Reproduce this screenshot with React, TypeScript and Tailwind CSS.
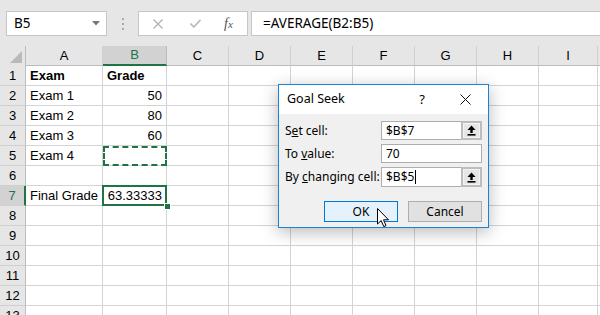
import React from "react";

const colW = [77, 64, 62, 62, 62, 62, 62, 62, 59, 40];
const colNames = ["A", "B", "C", "D", "E", "F", "G", "H", "I", ""];

type Cell = { text: string; bold?: boolean; right?: boolean };

const data: Record<number, Cell[]> = {
  1: [{ text: "Exam", bold: true }, { text: "Grade", bold: true }],
  2: [{ text: "Exam 1" }, { text: "50", right: true }],
  3: [{ text: "Exam 2" }, { text: "80", right: true }],
  4: [{ text: "Exam 3" }, { text: "60", right: true }],
  5: [{ text: "Exam 4" }, { text: "" }],
  7: [{ text: "Final Grade" }, { text: "63.33333", right: true }],
};

const UpArrow = () => (
  <svg width="9" height="11" viewBox="0 0 9 11">
    <polygon points="4.5,0.5 8.5,5 0.5,5" fill="#000" />
    <rect x="3.3" y="4.5" width="2.4" height="3.5" fill="#000" />
    <rect x="0.5" y="9" width="8" height="1.6" fill="#000" />
  </svg>
);

const RefButton = () => (
  <div className="w-[21px] h-full border-2 border-[#bdbdbd] bg-[#e6e6e6] flex items-center justify-center shrink-0">
    <div className="w-full h-full border border-[#f4f4f4] flex items-center justify-center">
      <UpArrow />
    </div>
  </div>
);

const Cursor = () => (
  <svg width="13" height="20" viewBox="0 0 13 20" className="absolute left-[377px] top-[208px]">
    <path
      d="M0.5 0.5 L0.5 16 L4.2 12.6 L6.8 18.6 L9 17.6 L6.5 11.8 L11.5 11.8 Z"
      fill="#fff"
      stroke="#000"
      strokeWidth="1"
      strokeLinejoin="round"
    />
  </svg>
);

const GoalSeek = () => (
  <div
    className="absolute left-[278px] top-[84px] w-[211px] h-[144px] border border-[#1883d7] bg-[#f0f0f0] shadow-[0_4px_16px_rgba(0,0,0,0.28)] flex flex-col text-[12px] text-black"
    style={{ fontFamily: '"Noto Sans", "Open Sans", sans-serif' }}
  >
    <div className="h-[29px] bg-white flex items-center pl-[8px] shrink-0">
      <span className="text-[12.5px]">Goal Seek</span>
      <span className="ml-auto w-[20px] text-center text-[13px] mr-[28px]">?</span>
      <svg width="11" height="11" viewBox="0 0 11 11" className="mr-[17px]">
        <path d="M0.5 0.5 L10.5 10.5 M10.5 0.5 L0.5 10.5" stroke="#111" strokeWidth="1" />
      </svg>
    </div>
    <div className="flex flex-col pl-[6px] pr-[6px] pt-[7px] gap-[4px]">
      <div className="flex items-center h-[19px]">
        <span className="w-[96px]">
          S<span className="underline">e</span>t cell:
        </span>
        <div className="flex h-full flex-1">
          <div className="flex-1 bg-white border border-[#adadad] border-r-0 flex items-center pl-[4px]">$B$7</div>
          <RefButton />
        </div>
      </div>
      <div className="flex items-center h-[19px]">
        <span className="w-[96px]">
          To <span className="underline">v</span>alue:
        </span>
        <div className="flex-1 h-full bg-white border border-[#adadad] flex items-center pl-[4px]">70</div>
      </div>
      <div className="flex items-center h-[20px]">
        <span className="w-[96px]">
          By <span className="underline">c</span>hanging cell:
        </span>
        <div className="flex h-full flex-1">
          <div className="flex-1 bg-white border border-[#adadad] border-r-0 flex items-center pl-[4px]">
            $B$5<span className="inline-block w-px h-[14px] bg-black ml-px" />
          </div>
          <RefButton />
        </div>
      </div>
      <div className="flex justify-end gap-[10px] mt-[10px]">
        <div className="w-[74px] h-[21px] bg-[#e5f1fb] border border-[#0078d7] flex items-center justify-center">OK</div>
        <div className="w-[74px] h-[21px] bg-[#e1e1e1] border border-[#adadad] flex items-center justify-center">Cancel</div>
      </div>
    </div>
  </div>
);

export default function App() {
  const rows = Array.from({ length: 13 }, (_, i) => i + 1);
  return (
    <div
      className="relative w-[600px] h-[315px] overflow-hidden bg-white text-black"
      style={{ fontFamily: '"Liberation Sans", Arial, sans-serif' }}
    >
      {/* formula bar */}
      <div className="h-[46px] bg-[#e6e6e6] flex items-start pt-[11px] pl-[6px]" style={{ fontFamily: '"Noto Sans", "Open Sans", sans-serif' }}>
        <div className="w-[101px] h-[25px] bg-white border border-[#c6c6c6] flex items-center pl-[7px] text-[13.5px]">
          <span>B5</span>
          <svg width="8" height="5" viewBox="0 0 8 5" className="ml-auto mr-[6px]">
            <polygon points="0,0 8,0 4,4.5" fill="#777" />
          </svg>
        </div>
        <div className="w-[31px] h-[25px] flex flex-col items-center justify-center gap-[3px]">
          <span className="w-[2px] h-[2px] bg-[#aaa]" />
          <span className="w-[2px] h-[2px] bg-[#aaa]" />
          <span className="w-[2px] h-[2px] bg-[#aaa]" />
        </div>
        <div className="w-[110px] h-[25px] bg-white border border-[#c6c6c6] flex items-center">
          <svg width="10" height="10" viewBox="0 0 10 10" className="ml-[14px]">
            <path d="M0.5 0.5 L9.5 9.5 M9.5 0.5 L0.5 9.5" stroke="#b0b0b0" strokeWidth="1.2" />
          </svg>
          <svg width="11" height="9" viewBox="0 0 11 9" className="ml-[27px]">
            <path d="M0.5 4.5 L3.8 8 L10.5 0.8" stroke="#b8b8b8" strokeWidth="1.6" fill="none" />
          </svg>
          <span
            className="ml-[23px] italic text-[14px] text-[#555] leading-none"
            style={{ fontFamily: '"Liberation Serif", "Times New Roman", serif' }}
          >
            f<span className="text-[11px]">x</span>
          </span>
        </div>
        <div className="ml-[3px] flex-1 h-[25px] bg-white border border-[#c6c6c6] border-r-0 flex items-center pl-[11px] text-[13.5px]">
          =AVERAGE(B2:B5)
        </div>
      </div>

      {/* column headers */}
      <div className="flex h-[20px] bg-[#e6e6e6] text-[13px]">
        <div className="w-[26px] shrink-0 border-r border-[#bcbcbc] relative">
          <svg width="12" height="12" viewBox="0 0 12 12" className="absolute right-[3px] bottom-[3px]">
            <polygon points="12,0 12,12 0,12" fill="#b9b9b9" />
          </svg>
        </div>
        {colW.map((w, i) => (
          <div
            key={i}
            className={
              i === 1
                ? "shrink-0 flex items-center justify-center bg-[#d2d2d2] border-r border-[#bcbcbc] border-b-2 border-b-[#217346] text-[#217346]"
                : "shrink-0 flex items-center justify-center border-r border-[#d0d0d0] border-b border-b-[#bcbcbc]"
            }
            style={{ width: w }}
          >
            {colNames[i]}
          </div>
        ))}
      </div>

      {/* rows */}
      {rows.map((r) => (
        <div key={r} className="flex h-[20px] text-[13px]">
          <div
            className={
              r === 7
                ? "w-[26px] shrink-0 bg-[#d2d2d2] border-r-2 border-r-[#217346] border-b border-[#d0d0d0] flex items-center justify-center text-[#217346]"
                : "w-[26px] shrink-0 bg-[#e6e6e6] border-r border-r-[#bcbcbc] border-b border-[#d0d0d0] flex items-center justify-center"
            }
          >
            {r}
          </div>
          {colW.map((w, i) => {
            const cell = data[r]?.[i];
            return (
              <div
                key={i}
                className={
                  "shrink-0 relative border-r border-b border-[#d4d4d4] flex items-center px-[4px] whitespace-nowrap " +
                  (cell?.right ? "justify-end" : "justify-start") +
                  (cell?.bold ? " font-bold" : "") +
                  (i === 1 && (r === 5 || r === 7) ? " z-10" : "")
                }
                style={{ width: w }}
              >
                {cell?.text}
                {r === 5 && i === 1 && (
                  <div className="absolute left-0 top-0 w-[64px] h-[20px] border-2 border-dashed border-[#217346]" />
                )}
                {r === 7 && i === 1 && (
                  <>
                    <div className="absolute -left-[1px] -top-[1px] w-[65px] h-[21px] border-2 border-[#217346]" />
                    <div className="absolute left-[61px] top-[17px] w-[7px] h-[7px] bg-[#217346] border border-white" />
                  </>
                )}
              </div>
            );
          })}
        </div>
      ))}

      <GoalSeek />
      <Cursor />
    </div>
  );
}
